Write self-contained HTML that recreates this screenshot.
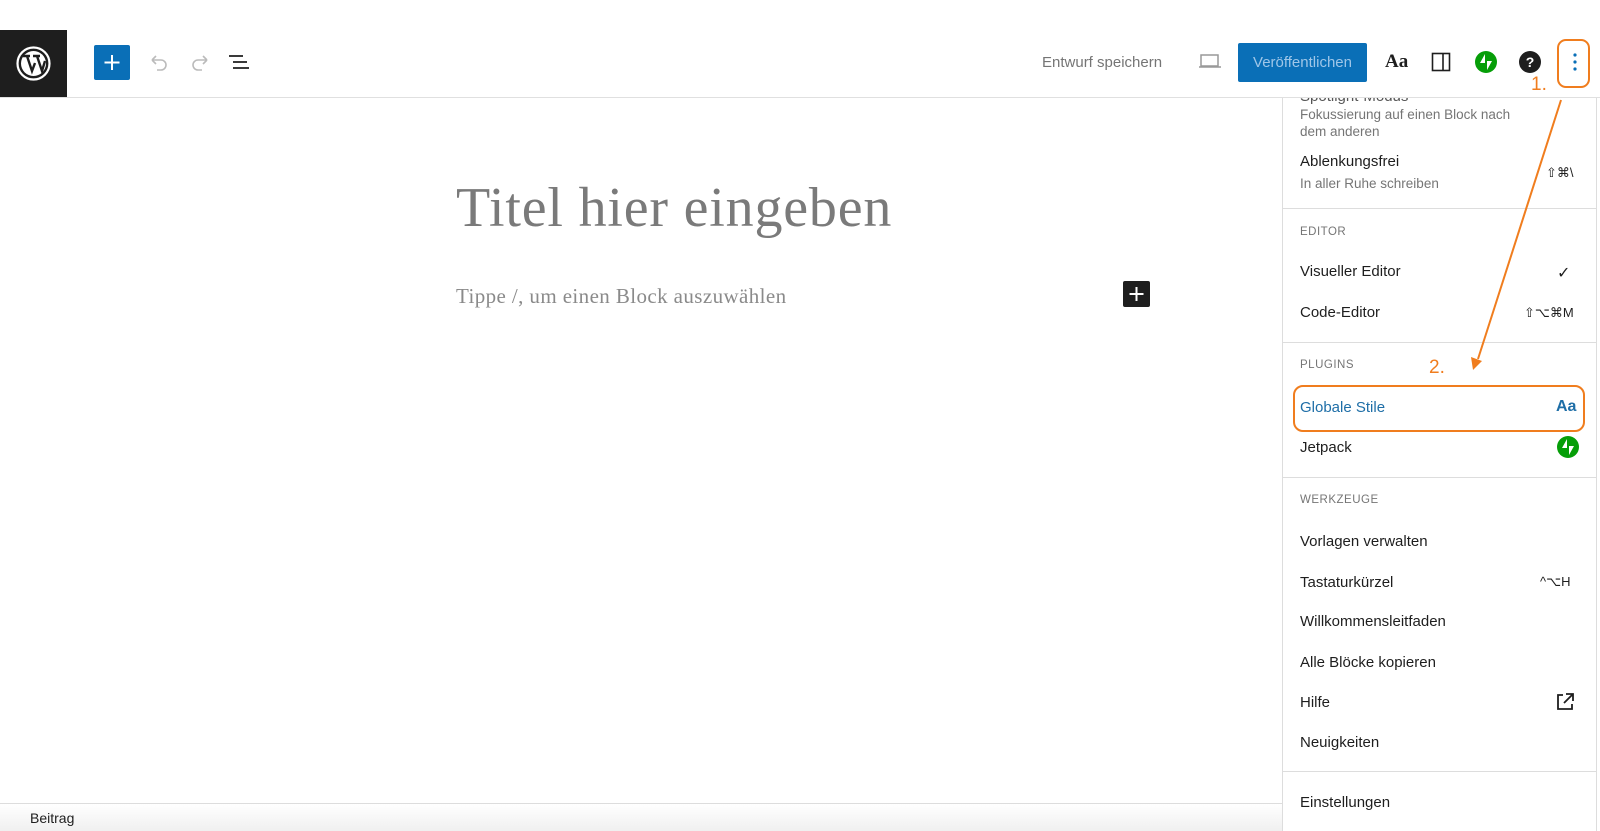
<!DOCTYPE html>
<html><head><meta charset="utf-8"><style>
*{margin:0;padding:0;box-sizing:border-box}
body{width:1600px;height:831px;overflow:hidden;background:#fff;position:relative;font-family:"Liberation Sans",sans-serif;color:#1e1e1e}
.a{position:absolute;white-space:nowrap}
.t{font-size:15px;line-height:16px}
.s{font-size:13.5px;color:#757575;line-height:16px}
.h{font-size:11.5px;color:#757575;letter-spacing:.5px;line-height:12px}
.sep{position:absolute;left:1283px;width:313px;height:1px;background:#ddd}
.or{color:#f07d1e}
</style></head><body>
<div class="a t" style="left:1300px;top:89px;color:#555">Spotlight-Modus</div>
<div class="a" style="left:0;top:0;width:1600px;height:97px;background:#fff"></div>
<div class="a" style="left:0;top:97px;width:1600px;height:1px;background:#e0e0e0"></div>
<div class="a" style="left:0;top:30px;width:67px;height:67px;background:#1e1e1e">
<svg width="67" height="67" viewBox="0 0 67 67"><circle cx="33.5" cy="33.5" r="16" fill="none" stroke="#fff" stroke-width="2.2"/><circle cx="33.5" cy="33.5" r="12.5" fill="#fff"/><path d="M23 26h7M27 26l5 15 3-8M33 26h7M37 26l5 15 3-10" stroke="#1e1e1e" stroke-width="2.4" fill="none"/></svg></div>
<div class="a" style="left:94px;top:45px;width:36px;height:35px;background:#0a6fb7;border-radius:2px">
<svg width="36" height="35"><path d="M18 10v15M10.5 17.5h15" stroke="#fff" stroke-width="2"/></svg></div>
<svg class="a" style="left:148px;top:52px" width="22" height="20"><path d="M4 8h9a5 5 0 0 1 0 10H9M4 8l4-4M4 8l4 4" stroke="#bbb" stroke-width="1.6" fill="none"/></svg>
<svg class="a" style="left:189px;top:52px" width="22" height="20"><path d="M18 8H9a5 5 0 0 0 0 10h4M18 8l-4-4M18 8l-4 4" stroke="#bbb" stroke-width="1.6" fill="none"/></svg>
<svg class="a" style="left:228px;top:53px" width="24" height="18"><path d="M1 3h14M5 9h14M5 15h16" stroke="#1e1e1e" stroke-width="1.8"/></svg>
<div class="a" style="left:1042px;top:54px;font-size:15px;color:#757575">Entwurf speichern</div>
<svg class="a" style="left:1198px;top:53px" width="24" height="16"><rect x="3" y="2" width="17" height="11" fill="none" stroke="#999" stroke-width="1.5"/><path d="M1 14h22" stroke="#999" stroke-width="1.5"/></svg>
<div class="a" style="left:1238px;top:43px;width:129px;height:39px;background:#0a6fb7;border-radius:2px;color:#9fc6e8;font-size:15px;text-align:center;line-height:39px">Veröffentlichen</div>
<div class="a" style="left:1385px;top:51px;font-size:19px;font-weight:bold;font-family:'Liberation Serif',serif">Aa</div>
<svg class="a" style="left:1431px;top:52px" width="20" height="20"><rect x="1.5" y="1.5" width="17" height="17" fill="none" stroke="#1e1e1e" stroke-width="1.6"/><path d="M12 2v16" stroke="#1e1e1e" stroke-width="1.6"/></svg>
<svg class="a" style="left:1475px;top:51px" width="22" height="22"><circle cx="11" cy="11" r="11" fill="#069e08"/><path d="M10 3v9H5zM12 19v-9h5z" fill="#fff"/></svg>
<svg class="a" style="left:1519px;top:51px" width="22" height="22"><circle cx="11" cy="11" r="11" fill="#1e1e1e"/><text x="11" y="16" font-size="14" font-weight="bold" fill="#fff" text-anchor="middle" font-family="Liberation Sans">?</text></svg>
<svg class="a" style="left:1572px;top:52px" width="6" height="20"><circle cx="3" cy="3" r="1.6" fill="#0a6fb7"/><circle cx="3" cy="10" r="1.6" fill="#0a6fb7"/><circle cx="3" cy="17" r="1.6" fill="#0a6fb7"/></svg>
<div class="a" style="left:1557px;top:39px;width:33px;height:49px;border:2px solid #f07d1e;border-radius:9px"></div>
<div class="a or" style="left:1531px;top:74px;font-size:19px">1.</div>

<div class="a" style="left:456px;top:176px;font-size:56px;letter-spacing:0.8px;font-family:'Liberation Serif',serif;color:#7a7a7a">Titel hier eingeben</div>
<div class="a" style="left:456px;top:284px;font-size:21px;letter-spacing:0.4px;font-family:'Liberation Serif',serif;color:#8a8a8a">Tippe /, um einen Block auszuwählen</div>
<div class="a" style="left:1123px;top:281px;width:27px;height:26px;background:#1e1e1e;border-radius:2px"><svg width="27" height="26"><path d="M13.5 6v14M6.5 13h14" stroke="#fff" stroke-width="2"/></svg></div>

<div class="a" style="left:0;top:803px;width:1283px;height:28px;background:linear-gradient(#fff,#f0f0f0);border-top:1px solid #ddd"></div>
<div class="a" style="left:30px;top:810px;font-size:14px">Beitrag</div>

<div class="a" style="left:1282px;top:98px;width:315px;height:733px;border-left:1px solid #ddd;border-right:1px solid #ddd"></div>
<div class="a s" style="left:1300px;top:107px">Fokussierung auf einen Block nach</div>
<div class="a s" style="left:1300px;top:124px">dem anderen</div>
<div class="a t" style="left:1300px;top:154px">Ablenkungsfrei</div>
<div class="a s" style="left:1300px;top:176px">In aller Ruhe schreiben</div>
<div class="a" style="left:1546px;top:165px;font-size:13px">⇧⌘\</div>
<div class="sep" style="top:208px"></div>
<div class="a h" style="left:1300px;top:226px">EDITOR</div>
<div class="a t" style="left:1300px;top:264px">Visueller Editor</div>
<div class="a" style="left:1557px;top:263px;font-size:16px">✓</div>
<div class="a t" style="left:1300px;top:305px">Code-Editor</div>
<div class="a" style="left:1524px;top:305px;font-size:13px">⇧⌥⌘M</div>
<div class="sep" style="top:342px"></div>
<div class="a h" style="left:1300px;top:359px">PLUGINS</div>
<div class="a or" style="left:1429px;top:357px;font-size:19px">2.</div>
<div class="a t" style="left:1300px;top:400px;color:#1e6ea7">Globale Stile</div>
<div class="a" style="left:1556px;top:398px;font-size:16px;font-weight:bold;color:#1e6ea7">Aa</div>
<div class="a" style="left:1293px;top:385px;width:292px;height:47px;border:2px solid #f07d1e;border-radius:10px"></div>
<div class="a t" style="left:1300px;top:440px">Jetpack</div>
<svg class="a" style="left:1557px;top:436px" width="22" height="22"><circle cx="11" cy="11" r="11" fill="#069e08"/><path d="M10 3v9H5zM12 19v-9h5z" fill="#fff"/></svg>
<div class="sep" style="top:477px"></div>
<div class="a h" style="left:1300px;top:494px">WERKZEUGE</div>
<div class="a t" style="left:1300px;top:534px">Vorlagen verwalten</div>
<div class="a t" style="left:1300px;top:575px">Tastaturkürzel</div>
<div class="a" style="left:1540px;top:574px;font-size:13px">^⌥H</div>
<div class="a t" style="left:1300px;top:614px">Willkommensleitfaden</div>
<div class="a t" style="left:1300px;top:655px">Alle Blöcke kopieren</div>
<div class="a t" style="left:1300px;top:695px">Hilfe</div>
<svg class="a" style="left:1555px;top:692px" width="20" height="20"><path d="M8 3H3v14h14v-5M11 2h7v7M18 2l-9 9" stroke="#1e1e1e" stroke-width="1.8" fill="none"/></svg>
<div class="a t" style="left:1300px;top:735px">Neuigkeiten</div>
<div class="sep" style="top:771px"></div>
<div class="a t" style="left:1300px;top:795px">Einstellungen</div>

<svg class="a" style="left:0;top:0" width="1600" height="831"><path d="M1561 100L1478 359" stroke="#f07d1e" stroke-width="2" fill="none"/><path d="M1473 370l-2-13 11 4z" fill="#f07d1e"/></svg>
</body></html>
